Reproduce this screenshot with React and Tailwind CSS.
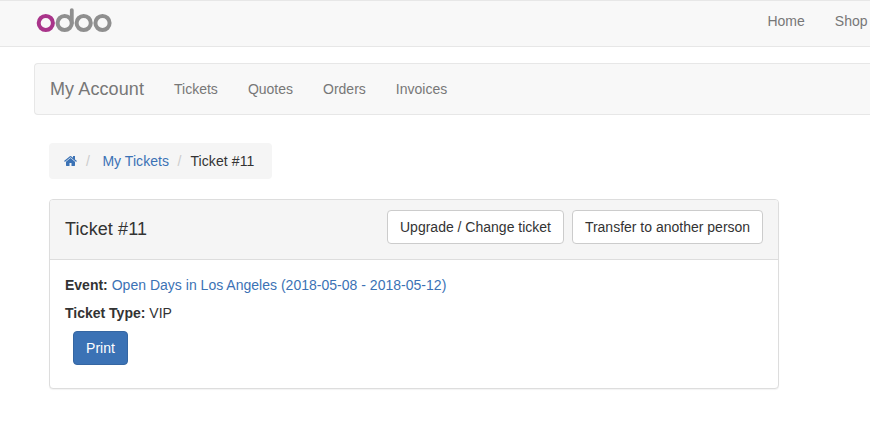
import React from "react";

function Logo() {
  return (
    <svg width="76" height="26" viewBox="0 0 76 26" fill="none" strokeWidth="4" aria-label="odoo">
      <circle cx="9.8" cy="16" r="7.1" stroke="#a9348a" />
      <g stroke="#8f8f8f">
        <circle cx="28.7" cy="16" r="7.1" />
        <path d="M35.8 16V3.1" strokeLinecap="round" strokeWidth="3.8" />
        <circle cx="47.7" cy="16" r="7.1" />
        <circle cx="66.5" cy="16" r="7.1" />
      </g>
    </svg>
  );
}

function HomeIcon() {
  return (
    <svg width="13" height="14" viewBox="0 0 1664 1792" fill="currentColor">
      <path d="M1408 992v480q0 26-19 45t-45 19h-384v-384h-256v384h-384q-26 0-45-19t-19-45v-480q0-1 .5-3t.5-3l575-474 575 474q1 2 1 6zm223-69l-62 74q-8 9-21 11h-3q-13 0-21-7l-692-577-692 577q-12 8-24 7-13-2-21-11l-62-74q-8-10-7-23.5t11-21.5l719-599q32-26 76-26t76 26l244 204v-195q0-14 9-23t23-9h192q14 0 23 9t9 23v408l219 182q10 8 11 21.5t-7 23.5z" />
    </svg>
  );
}

const accountLinks = ["Tickets", "Quotes", "Orders", "Invoices"];

export default function App() {
  return (
    <div className="h-[426px] w-[870px] overflow-hidden bg-white font-['Liberation_Sans',Arial,sans-serif] text-sm text-[#333]">
      <header className="flex h-[47px] justify-between border-y border-[#e7e7e7] bg-[#f8f8f8] pl-9 text-[#777]">
        <a className="mt-[6px]">
          <Logo />
        </a>
        <nav className="mt-[10px] flex gap-[30px] pr-[2.5px] whitespace-nowrap">
          <a>Home</a>
          <a>Shop</a>
        </nav>
      </header>

      <nav className="mt-4 ml-[34px] flex h-[52px] items-center rounded-l border border-r-0 border-[#e7e7e7] bg-[#f8f8f8] pl-[15px] text-[#777]">
        <a className="mr-[30px] text-lg leading-5 tracking-[0.1px]">My Account</a>
        <div className="flex gap-[30px]">
          {accountLinks.map((label) => (
            <a key={label}>{label}</a>
          ))}
        </div>
      </nav>

      <main className="ml-[49px] w-[730px]">
        <ol className="mt-7 flex h-9 w-[223px] items-center rounded bg-[#f5f5f5] pl-[15px] whitespace-nowrap">
          <li className="text-[#3b72b5]">
            <HomeIcon />
          </li>
          <li className="ml-[9px] text-[#ccc]">/</li>
          <li className="ml-[12.5px] tracking-[0.05px] text-[#3b72b5]">My Tickets</li>
          <li className="ml-[8.5px] text-[#ccc]">/</li>
          <li className="ml-[9px] tracking-[0.1px]">Ticket #11</li>
        </ol>

        <section className="mt-5 h-[190px] rounded border border-[#ddd] bg-white shadow-[0_1px_1px_rgba(0,0,0,0.05)]">
          <div className="flex h-[60px] justify-between rounded-t-[3px] border-b border-[#ddd] bg-[#f5f5f5] px-[15px] pt-[10px]">
            <h4 className="mt-[9px] text-lg leading-5 tracking-[0.1px]">Ticket #11</h4>
            <div className="flex gap-2 whitespace-nowrap">
              <button className="h-[34px] w-[177px] rounded border border-[#ccc] bg-white">Upgrade / Change ticket</button>
              <button className="h-[34px] w-[191px] rounded border border-[#ccc] bg-white">Transfer to another person</button>
            </div>
          </div>
          <div className="px-[15px] pt-[15px]">
            <p>
              <b>Event:</b> <a className="tracking-[0.015px] text-[#3b72b5]">Open Days in Los Angeles (2018-05-08 - 2018-05-12)</a>
            </p>
            <p className="mt-2">
              <b>Ticket Type:</b> VIP
            </p>
            <button className="mt-2 ml-2 h-[34px] w-[55px] rounded border border-[#3566a2] bg-[#3b72b5] text-white">Print</button>
          </div>
        </section>
      </main>
    </div>
  );
}
